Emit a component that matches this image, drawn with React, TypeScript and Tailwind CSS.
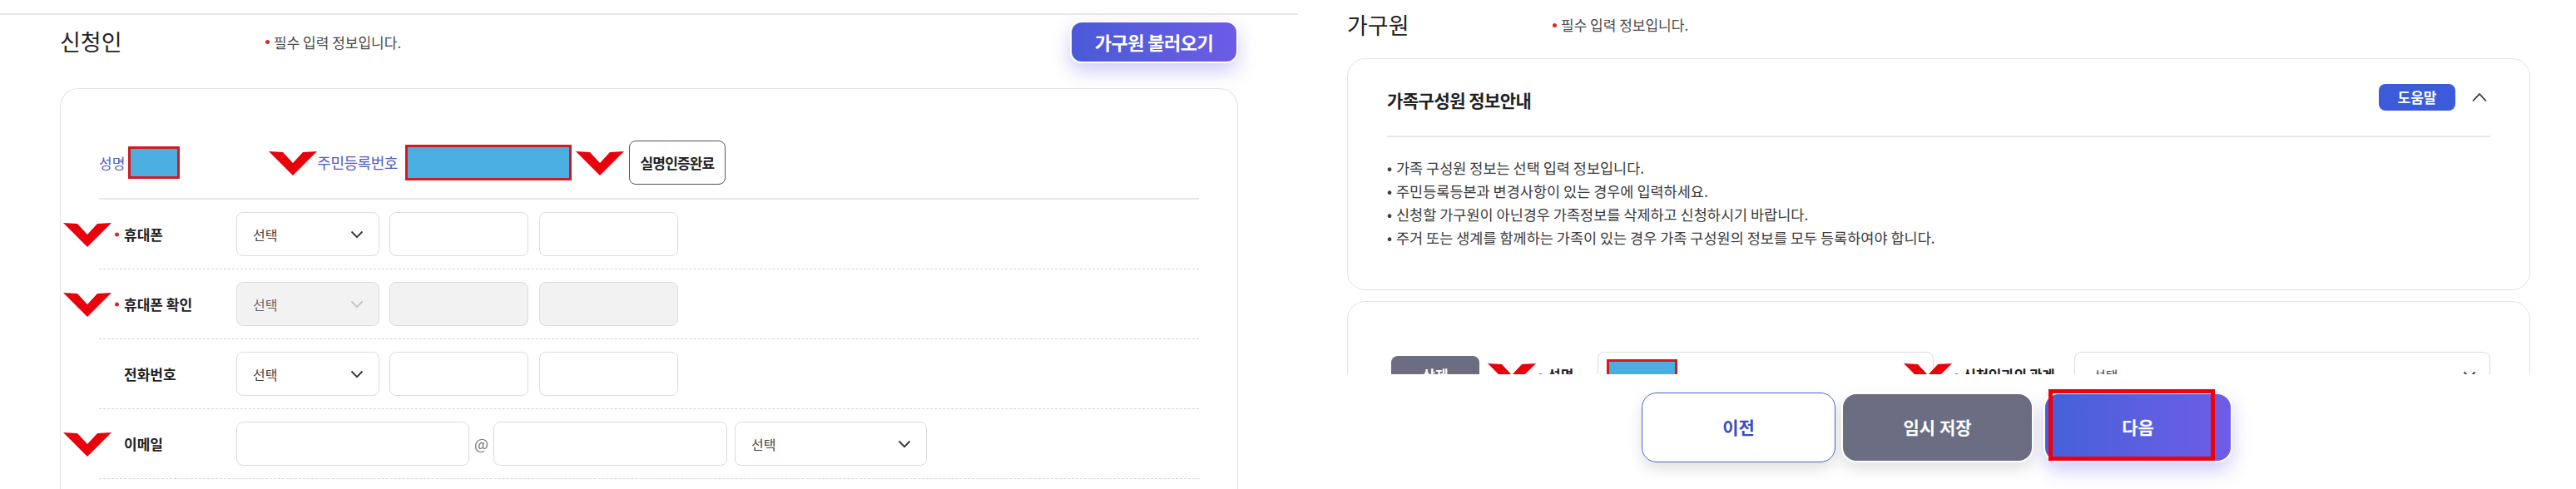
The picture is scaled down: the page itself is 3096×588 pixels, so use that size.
import type { ReactNode } from 'react';

const BULLETS = [
  '가족 구성원 정보는 선택 입력 정보입니다.',
  '주민등록등본과 변경사항이 있는 경우에 입력하세요.',
  '신청할 가구원이 아닌경우 가족정보를 삭제하고 신청하시기 바랍니다.',
  '주거 또는 생계를 함께하는 가족이 있는 경우 가족 구성원의 정보를 모두 등록하여야 합니다.',
];

// red check annotation drawn over the form
function RedV({ className = '' }: { className?: string }) {
  return (
    <svg viewBox="0 0 58 30" className={className}>
      <polygon points="0,1 17,2 29,15 41,2 58,1 29,30" fill="#e8000b" />
    </svg>
  );
}

function ChevronDown({ color = '#333' }: { color?: string }) {
  return (
    <svg width="16" height="10" viewBox="0 0 16 10">
      <polyline points="1.5,1.5 8,8.2 14.5,1.5" fill="none" stroke={color} strokeWidth="1.8" />
    </svg>
  );
}

function ChevronUp() {
  return (
    <svg width="20" height="12" viewBox="0 0 20 12" className="ml-[19px] mr-[3px]">
      <polyline points="2,10.5 10,2 18,10.5" fill="none" stroke="#333" strokeWidth="1.8" />
    </svg>
  );
}

function Note() {
  return (
    <p className="flex items-center text-[17px] text-[#4a4a4a]">
      <span className="mr-[5px] h-[5px] w-[5px] rounded-full bg-[#d7282f]" />
      필수 입력 정보입니다.
    </p>
  );
}

function Row({ label, dot, mark, children }: { label: string; dot?: boolean; mark?: boolean; children: ReactNode }) {
  return (
    <div className="relative flex h-[84px] items-center border-b border-dashed border-[#d6d6d6]">
      {mark && <RedV className="absolute left-[-43px] top-1/2 h-[30px] w-[58px] -translate-y-1/2" />}
      <div className="relative w-[165px] pl-[30px] text-[17px] font-bold text-[#222]">
        {dot && <span className="absolute left-[19px] top-1/2 h-[5px] w-[5px] -translate-y-1/2 rounded-full bg-[#d7282f]" />}
        {label}
      </div>
      <div className="flex items-center">{children}</div>
    </div>
  );
}

function SelectBox({ className, disabled }: { className: string; disabled?: boolean }) {
  return (
    <div
      className={`flex h-[53px] items-center justify-between rounded-[8px] border border-[#dcdcdc] pl-[19px] pr-[18px] text-[16px] ${
        disabled ? 'bg-[#f2f2f2] text-[#666]' : 'bg-white text-[#444]'
      } ${className}`}
    >
      선택
      <ChevronDown color={disabled ? '#c4c4c4' : '#333'} />
    </div>
  );
}

function Field({ className, disabled }: { className: string; disabled?: boolean }) {
  return (
    <div
      className={`h-[53px] rounded-[8px] border border-[#dcdcdc] ${disabled ? 'bg-[#f2f2f2]' : 'bg-white'} ${className}`}
    />
  );
}

function ApplicantPanel() {
  return (
    <section className="flex h-[588px] w-[1560px] shrink-0 flex-col overflow-hidden">
      <div className="mt-[16px] border-t-2 border-[#e9e9e9]" />
      <div className="mt-[7px] flex h-[51px] items-center px-[72px]">
        <h2 className="w-[247px] text-[27px] text-[#222]">신청인</h2>
        <Note />
        <button className="ml-auto h-[51px] w-[202px] rounded-[14px] border-2 border-white bg-linear-to-r from-[#4a5ad8] to-[#6c5ce7] text-[22px] font-bold tracking-tight text-white shadow-[0_10px_22px_rgba(98,90,230,0.3)]">
          가구원 불러오기
        </button>
      </div>
      <div className="mx-[72px] mt-[30px] flex-1 rounded-t-[22px] border border-b-0 border-[#e3e3e3] px-[46px]">
        <div className="flex items-center border-b-2 border-[#e6e6e6] pb-[16px] pt-[62px]">
          <span className="text-[17px] text-[#4c5cc6]">성명</span>
          <div className="ml-[4px] h-[39px] w-[62px] border-[3px] border-[#d11a22] bg-[#4aaee0]" />
          <RedV className="ml-[107px] h-[30px] w-[58px]" />
          <span className="text-[18px] tracking-tight text-[#4c5cc6]">주민등록번호</span>
          <div className="ml-[9px] h-[43px] w-[200px] border-[3px] border-[#d11a22] bg-[#4aaee0]" />
          <RedV className="ml-[5px] h-[30px] w-[58px]" />
          <button className="ml-[6px] h-[53px] w-[116px] rounded-[8px] border border-[#555] bg-white text-[17px] font-bold tracking-tighter text-[#222]">
            실명인증완료
          </button>
        </div>
        <Row label="휴대폰" dot mark>
          <SelectBox className="w-[172px]" />
          <Field className="ml-[12px] w-[167px]" />
          <Field className="ml-[13px] w-[167px]" />
        </Row>
        <Row label="휴대폰 확인" dot mark>
          <SelectBox className="w-[172px]" disabled />
          <Field className="ml-[12px] w-[167px]" disabled />
          <Field className="ml-[13px] w-[167px]" disabled />
        </Row>
        <Row label="전화번호">
          <SelectBox className="w-[172px]" />
          <Field className="ml-[12px] w-[167px]" />
          <Field className="ml-[13px] w-[167px]" />
        </Row>
        <Row label="이메일" mark>
          <Field className="w-[280px]" />
          <span className="mx-[6px] text-[18px] text-[#777]">@</span>
          <Field className="w-[281px]" />
          <SelectBox className="ml-[9px] w-[231px]" />
        </Row>
      </div>
    </section>
  );
}

function HouseholdPanel() {
  return (
    <section className="relative h-[588px] w-[1536px] shrink-0 overflow-hidden pl-[59px] pr-[55px]">
      <div className="mt-[12px] flex h-[36px] items-center">
        <h2 className="w-[247px] text-[27px] text-[#222]">가구원</h2>
        <Note />
      </div>

      <div className="mt-[22px] rounded-[22px] border border-[#e3e3e3] px-[47px] pb-[48px]">
        <div className="flex h-[94px] items-center border-b-2 border-[#e6e6e6]">
          <h3 className="mt-2 text-[21px] font-bold tracking-tight text-[#222]">가족구성원 정보안내</h3>
          <span className="ml-auto flex h-[32px] w-[92px] items-center justify-center rounded-[8px] bg-[#3b5bdb] text-[17px] font-bold text-white">
            도움말
          </span>
          <ChevronUp />
        </div>
        <ul className="pt-[23px] text-[17.5px] leading-[28px] text-[#3a3a3a]">
          {BULLETS.map((text) => (
            <li key={text} className="flex">
              <span className="w-[11px]">•</span>
              {text}
            </li>
          ))}
        </ul>
      </div>

      <div className="mt-[13px] h-[300px] rounded-[22px] border border-[#e3e3e3] pt-[60px]">
        <div className="flex h-[56px] items-center">
          <span className="ml-[52px] flex h-[46px] w-[106px] items-center justify-center rounded-[8px] bg-[#6b6e80] text-[17px] font-bold text-white">
            삭제
          </span>
          <RedV className="ml-[10px] h-[30px] w-[58px]" />
          <span className="ml-[3px] h-[5px] w-[5px] rounded-full bg-[#d7282f]" />
          <span className="ml-[6px] text-[17px] font-bold text-[#222]">성명</span>
          <div className="ml-[29px] flex h-[56px] w-[404px] items-center rounded-[8px] border border-[#dcdcdc] pl-[10px]">
            <div className="h-[38px] w-[85px] border-[3px] border-[#d11a22] bg-[#4aaee0]" />
          </div>
          <RedV className="relative ml-[-36px] h-[30px] w-[58px]" />
          <span className="ml-[3px] h-[5px] w-[5px] rounded-full bg-[#d7282f]" />
          <span className="ml-[5px] text-[17px] font-bold tracking-tight text-[#222]">신청인과의 관계</span>
          <div className="ml-auto mr-[47px] flex h-[56px] w-[500px] items-center justify-between rounded-[8px] border border-[#dcdcdc] pl-[22px] pr-[16px] text-[16px] text-[#444]">
            선택
            <ChevronDown />
          </div>
        </div>
      </div>

      <div className="absolute inset-x-0 bottom-0 flex h-[138px] justify-center bg-white pt-[22px]">
        <button className="h-[84px] w-[233px] rounded-[18px] border border-[#5363c9] bg-white text-[21px] font-bold text-[#3b4cc0] shadow-[0_8px_18px_rgba(0,0,0,0.12)]">
          이전
        </button>
        <button className="ml-[7px] h-[84px] w-[231px] rounded-[18px] border-2 border-white bg-[#6b6e82] text-[21px] font-bold text-white shadow-[0_8px_18px_rgba(0,0,0,0.12)]">
          임시 저장
        </button>
        <div className="relative ml-[12px] h-[84px] w-[227px]">
          <button className="h-full w-full rounded-[18px] border-2 border-white bg-linear-to-r from-[#4361d8] to-[#6e5ce8] text-[21px] font-bold text-white shadow-[0_10px_22px_rgba(98,90,230,0.3)]">
            다음
          </button>
          <div className="pointer-events-none absolute left-[6px] top-[-4px] h-[86px] w-[200px] border-[5px] border-[#f0000a]" />
        </div>
      </div>
    </section>
  );
}

export default function App() {
  return (
    <div className="flex h-[588px] w-[3096px] overflow-hidden bg-white font-['Noto_Sans_CJK_KR','Noto_Sans',sans-serif]">
      <ApplicantPanel />
      <HouseholdPanel />
    </div>
  );
}
